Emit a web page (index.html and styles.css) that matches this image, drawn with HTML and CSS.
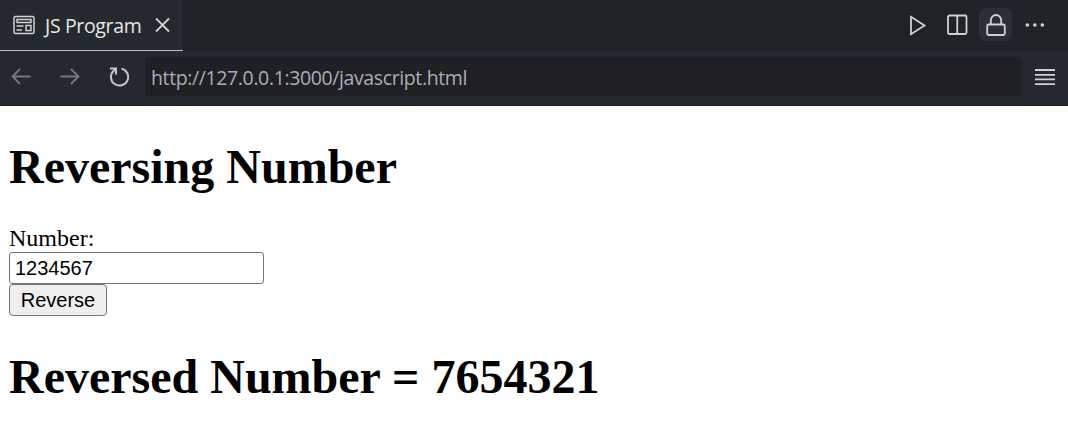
FILE: index.html
```html
<!DOCTYPE html>
<html lang="en">
<head>
<meta charset="utf-8">
<title>JS Program</title>
<link rel="stylesheet" href="styles.css">
</head>
<body>
<header class="tabs">
  <div class="tab">
    <svg class="tab-icon" width="22" height="20" viewBox="0 0 22 20"><rect x="1" y="1.500" width="20" height="17" rx="1.5"/><rect x="4" y="4.500" width="14" height="3"/><path d="M3.5 11h7M3.5 15h5.500"/><rect x="13" y="10.500" width="5" height="5"/></svg>
    <span class="tab-title">JS Program</span>
    <svg class="close" width="16" height="16" viewBox="0 0 16 16"><path d="M1 1.500l13 13M14 1.500l-13 13"/></svg>
  </div>
  <div class="actions">
    <svg width="18" height="22" viewBox="0 0 18 22"><path d="M2 2.800v17.400L15.500 11.500z"/></svg>
    <svg class="split" width="22" height="22" viewBox="0 0 22 22"><rect x="1" y="1.500" width="18.500" height="18.500" rx="1.500"/><path d="M10.250 1.500v18.500"/></svg>
    <div class="lock"><svg width="20" height="24" viewBox="0 0 20 24"><path d="M4.800 11.500V7.200a5.200 5.200 0 0 1 10.400 0v4.300"/><rect x="1.200" y="11.500" width="17.600" height="10.500" rx="1.500"/></svg></div>
    <svg class="more" width="20" height="6" viewBox="0 0 20 6"><circle cx="2.300" cy="3" r="1.800"/><circle cx="9.800" cy="3" r="1.800"/><circle cx="17.300" cy="3" r="1.800"/></svg>
  </div>
</header>
<nav class="toolbar">
  <svg class="dim" width="20" height="18" viewBox="0 0 20 18"><path d="M19.500 8.500H1.500M9 1L1.500 8.500L9 16"/></svg>
  <svg class="dim" width="20" height="18" viewBox="0 0 20 18"><path d="M.5 8.500h18M11 1L18.500 8.500L11 16"/></svg>
  <svg class="reload" width="20" height="20" viewBox="0 0 20 20"><path d="M12.500 1.600A8.600 8.600 0 1 1 5 3.400L7 2M1 1.500h6v6"/></svg>
  <div class="address"><span>http://127.0.0.1:3000/javascript.html</span></div>
  <svg class="menu" width="20" height="18" viewBox="0 0 20 18"><path d="M0 2h20M0 6.800h20M0 11.400h20M0 16.200h20"/></svg>
</nav>
<main class="page">
  <h1>Reversing Number</h1>
  <label class="label" for="number">Number:</label>
  <input class="number" id="number" type="text" value="1234567">
  <button class="reverse">Reverse</button>
  <h1 class="result">Reversed Number = 7654321</h1>
</main>
</body>
</html>
```
FILE: styles.css
```css
* { box-sizing: border-box; }
body { margin: 0; background: #fff; font-family: "Open Sans", "Noto Sans", sans-serif; }
svg { display: block; flex: none; fill: none; stroke: #d0d0ce; stroke-width: 1.8; }
.tabs { display: flex; justify-content: space-between; height: 51px; background: #1f2226; }
.tab { display: flex; align-items: center; width: 183px; height: 51px; padding: 0 0 1px 13px; background: #24292f; border-bottom: 1px solid #b9bcba; }
.tab-icon { stroke-width: 1.5; }
.tab-title { width: 98px; margin-left: 10px; padding-top: 2px; font-size: 19.500px; line-height: 28px; letter-spacing: -.35px; color: #e6e6e4; white-space: nowrap; }
.close { margin-left: 12px; }
.actions { display: flex; align-items: center; padding: 0 23px 2px 0; }
.split { margin-left: 20px; }
.lock { display: flex; align-items: center; justify-content: center; width: 33px; height: 33px; margin-left: 10px; border-radius: 7px; background: #2b2e38; }
.more { margin-left: 13px; fill: #d0d0ce; stroke: none; }
.toolbar { display: flex; align-items: center; height: 55px; padding: 0 13px 3px 11px; background: #242830; border-bottom: 1px solid #202329; }
.dim { stroke: #74777b; margin-right: 29px; }
.reload { margin-right: 16px; stroke: #c6c7c5; stroke-width: 2; }
.address { display: flex; align-items: center; width: 876px; height: 39px; padding: 2px 0 0 6px; background: #1f2023; color: #a8adba; font-size: 19.500px; line-height: 28px; letter-spacing: -.38px; white-space: nowrap; }
.menu { margin-left: 14px; }
.page { display: flex; flex-direction: column; align-items: flex-start; padding: 33px 9px 0; font-family: "Liberation Serif", serif; color: #000; }
h1 { margin: 0; font-size: 48px; line-height: 56px; white-space: nowrap; }
.label { margin-top: 30px; font-size: 24px; line-height: 27px; }
.number { width: 255px; height: 32px; padding: 0 5px; border: 1px solid #767676; border-radius: 3px; font: 20px "Liberation Sans", sans-serif; }
.reverse { width: 98px; height: 32px; padding: 0; border: 1px solid #767676; border-radius: 4px; background: #efefef; color: #000; font: 20px "Liberation Sans", sans-serif; }
.result { margin-top: 33px; }
```
